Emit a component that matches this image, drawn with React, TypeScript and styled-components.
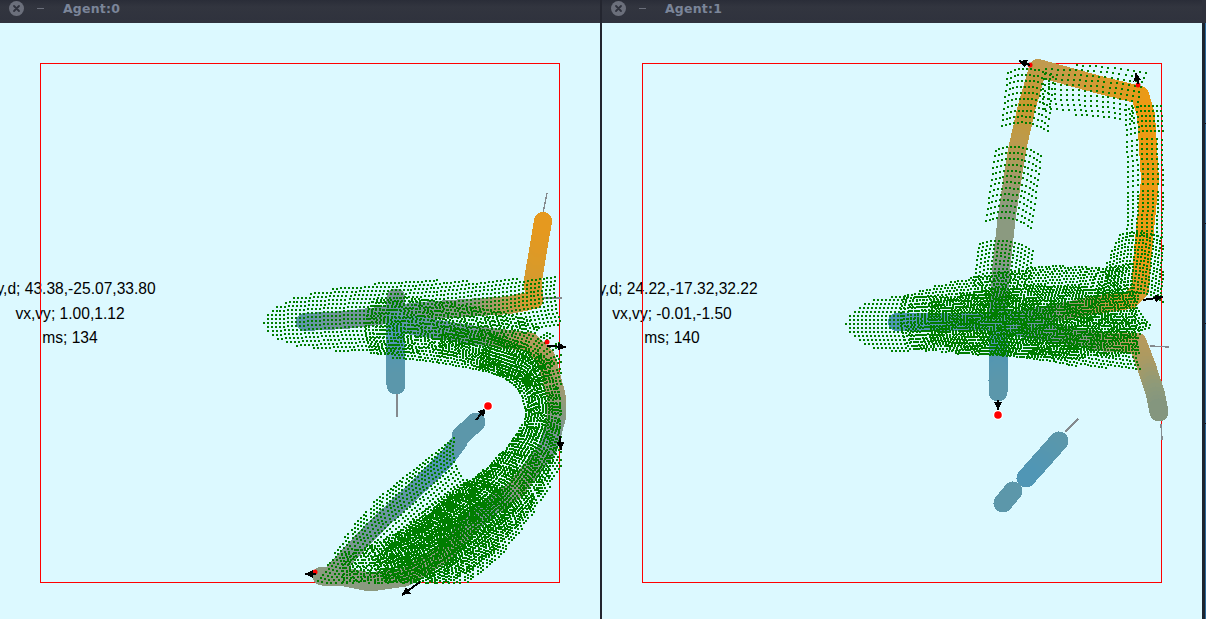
import React from "react"
import styled, { createGlobalStyle } from "styled-components"

// all plot data below is in screen pixels, each window's viewBox does the offset
type TrailPoint = [number, number, string]
type FanPoint = [number, number, number]
type Fan = { pts: FanPoint[]; row?: number; gap?: number; radius?: number; shift?: number }
type Arrow = { x1: number; y1: number; x2: number; y2: number }

type AgentData = {
    id: number
    originX: number
    readout: string[]
    trails: { pts: TrailPoint[]; width: number }[]
    fans: Fan[]
    arrows: Arrow[]
    needles: number[][]
    targets: number[][]
    marks: number[][]
}

const GlobalStyle = createGlobalStyle`
    html, body {
        margin: 0;
        padding: 0;
        height: 100%;
        overflow: hidden;
        background: #2d303c;
    }
    #root {
        height: 100%;
    }
`

const Desktop = styled.div`
    display: flex;
    width: 1206px;
    height: 619px;
    background: #2d303c;
`

const Window = styled.section`
    display: flex;
    flex-direction: column;
    width: 600px;
    height: 100%;
`

const Divider = styled.div`
    width: 2px;
    background: #23252f;
`

const EdgeStrip = styled.div`
    display: flex;
    flex-direction: column;
    flex: 1;
`

const EdgeCap = styled.div`
    flex: 0 0 23px;
    background: #2f323d;
`

const EdgeBody = styled.div`
    position: relative;
    flex: 1;
    background: #1c2530;
    border-right: 1px solid #2d6a9c;
`

const EdgeTick = styled.span<{ $y: number }>`
    position: absolute;
    right: -1px;
    width: 1px;
    top: ${(p) => p.$y}px;
    height: 1px;
    background: #10141a;
`

const TitleBar = styled.header`
    display: flex;
    align-items: center;
    flex: 0 0 23px;
    padding-left: 9px;
    padding-bottom: 6px;
    box-sizing: border-box;
    background: linear-gradient(#2a2d38, #32353f 30%, #2f323d);
`

const CloseButton = styled.span`
    display: flex;
    width: 15px;
    height: 15px;
    border-radius: 50%;
    background: #6b6f7b;
    color: #2f323d;
`

const MinimizeButton = styled.span`
    width: 7px;
    height: 1px;
    margin-left: 13px;
    background: #6b6f7b;
`

const WindowTitle = styled.span`
    margin-left: 19px;
    font-family: "DejaVu Sans", sans-serif;
    font-size: 12.5px;
    font-weight: 700;
    letter-spacing: 0.2px;
    color: #7b8599;
`

const Canvas = styled.div`
    position: relative;
    flex: 1;
    overflow: hidden;
    background: #dcf9ff;
`

const Readout = styled.div`
    position: absolute;
    left: -30px;
    top: 254px;
    width: 200px;
    font-family: "Liberation Sans", Arial, sans-serif;
    font-size: 15.6px;
    line-height: 24.5px;
    text-align: center;
    white-space: nowrap;
    color: #000;
`

const Plot = styled.svg`
    position: relative;
    display: block;
    width: 600px;
    height: 596px;
`

const hex = (c: string) => [1, 3, 5].map((i) => parseInt(c.slice(i, i + 2), 16))

function mix(a: string, b: string, t: number) {
    const ca = hex(a)
    const cb = hex(b)
    return `rgb(${ca.map((v, i) => Math.round(v + (cb[i] - v) * t)).join(",")})`
}

// walks a polyline in small steps so the colour can change along it
function trailSegments(pts: TrailPoint[]) {
    const out: { x1: number; y1: number; x2: number; y2: number; color: string }[] = []
    for (let i = 0; i < pts.length - 1; i++) {
        const [ax, ay, ac] = pts[i]
        const [bx, by, bc] = pts[i + 1]
        const steps = Math.max(1, Math.round(Math.hypot(bx - ax, by - ay) / 4))
        for (let s = 0; s < steps; s++) {
            out.push({
                x1: ax + ((bx - ax) * s) / steps,
                y1: ay + ((by - ay) * s) / steps,
                x2: ax + ((bx - ax) * (s + 1)) / steps,
                y2: ay + ((by - ay) * (s + 1)) / steps,
                color: mix(ac, bc, (s + 0.5) / steps),
            })
        }
    }
    return out
}

// corner cutting, so the rows of a fan turn gradually
function smooth(pts: FanPoint[]) {
    let cur = pts
    for (let n = 0; n < 2; n++) {
        const next: FanPoint[] = [cur[0]]
        for (let i = 0; i < cur.length - 1; i++) {
            const a = cur[i]
            const b = cur[i + 1]
            next.push([0, 1, 2].map((k) => a[k] * 0.75 + b[k] * 0.25) as FanPoint)
            next.push([0, 1, 2].map((k) => a[k] * 0.25 + b[k] * 0.75) as FanPoint)
        }
        next.push(cur[cur.length - 1])
        cur = next
    }
    return cur
}

// sensor footprint: circular rows of dots swept along the path
function fanDots(fan: Fan, clip: number[]) {
    const { row = 4, gap = 4, radius = 70, shift = 0 } = fan
    const pts = smooth(fan.pts)
    let d = ""
    let carried = shift
    for (let i = 0; i < pts.length - 1; i++) {
        const [ax, ay, aw] = pts[i]
        const [bx, by, bw] = pts[i + 1]
        const len = Math.hypot(bx - ax, by - ay)
        if (len === 0) continue
        const tx = (bx - ax) / len
        const ty = (by - ay) / len
        let pos = carried
        while (pos < len) {
            const f = pos / len
            const w = aw + (bw - aw) * f
            const cx = ax + (bx - ax) * f
            const cy = ay + (by - ay) * f
            const count = Math.floor(w / gap)
            for (let j = -count; j <= count; j++) {
                const theta = (j * gap) / radius
                const side = radius * Math.sin(theta)
                const ahead = radius * (1 - Math.cos(theta))
                const x = Math.round(cx - ty * side + tx * ahead)
                const y = Math.round(cy + tx * side + ty * ahead)
                if (x < clip[0] || x > clip[2] || y < clip[1] || y > clip[3]) continue
                d += `M${x} ${y}h2v2h-2z`
            }
            pos += row
        }
        carried = pos - len
    }
    return d
}

const BLUE = "#4f96b5"
const TEAL = "#5c97aa"
const SLATE = "#72959a"
const GREY = "#8b9a80"
const TAN = "#b19a5c"
const AMBER = "#d29a30"
const ORANGE = "#ec9a14"

const agents: AgentData[] = [
    {
        id: 0,
        originX: 0,
        readout: ["x,y,d; 43.38,-25.07,33.80", "vx,vy; 1.00,1.12", "ms; 134"],
        trails: [
            {
                width: 18,
                pts: [
                    [305, 322, TEAL],
                    [345, 320, SLATE],
                    [420, 311, SLATE],
                    [480, 307, GREY],
                    [510, 305, TAN],
                    [534, 300, AMBER],
                    [533, 280, AMBER],
                    [543, 221, "#e6991e"],
                ],
            },
            {
                width: 19,
                pts: [
                    [410, 325, TEAL],
                    [480, 336, SLATE],
                    [530, 342, TAN],
                    [546, 358, TAN],
                    [556, 395, "#a09a70"],
                    [557, 415, GREY],
                    [548, 448, SLATE],
                    [515, 490, GREY],
                    [480, 515, SLATE],
                    [440, 556, GREY],
                    [405, 577, GREY],
                    [370, 582, GREY],
                    [345, 577, GREY],
                    [322, 576, GREY],
                ],
            },
            {
                width: 17,
                pts: [
                    [335, 570, GREY],
                    [372, 530, SLATE],
                    [420, 485, "#5f96a8"],
                    [447, 458, BLUE],
                    [459, 442, TEAL],
                ],
            },
            {
                width: 19,
                pts: [
                    [461, 436, TEAL],
                    [476, 422, TEAL],
                ],
            },
            {
                width: 19,
                pts: [
                    [396, 298, "#7b9490"],
                    [395, 340, BLUE],
                    [396, 385, TEAL],
                ],
            },
        ],
        fans: [
            {
                pts: [
                    [263, 322, 2],
                    [272, 322, 16],
                    [295, 321, 27],
                    [350, 318, 36],
                    [420, 316, 38],
                    [480, 310, 30],
                    [556, 300, 26],
                ],
                row: 4,
                radius: 80,
            },
            {
                pts: [
                    [365, 325, 30],
                    [420, 328, 34],
                    [500, 342, 34],
                    [540, 356, 28],
                    [552, 390, 26],
                    [552, 425, 28],
                    [525, 470, 32],
                    [485, 515, 44],
                    [445, 550, 46],
                    [405, 570, 36],
                    [340, 574, 20],
                ],
                row: 3.5,
                gap: 3.5,
                radius: 60,
            },
            {
                pts: [
                    [480, 350, 18],
                    [530, 368, 20],
                    [548, 420, 18],
                    [515, 480, 34],
                    [470, 525, 42],
                    [430, 555, 34],
                    [380, 575, 20],
                ],
                row: 3,
                gap: 3,
                radius: 45,
                shift: 2,
            },
            {
                pts: [
                    [330, 600, 24],
                    [385, 540, 48],
                    [463, 478, 46],
                ],
                row: 4,
                gap: 4,
                radius: 48,
            },
            {
                pts: [
                    [390, 570, 24],
                    [440, 535, 34],
                    [500, 490, 28],
                ],
                row: 3.5,
                gap: 3,
                radius: 70,
            },
            {
                pts: [
                    [440, 340, 16],
                    [510, 355, 20],
                    [545, 375, 16],
                ],
                row: 3,
                gap: 3,
                radius: 90,
            },
        ],
        arrows: [
            { x1: 547, y1: 346, x2: 566, y2: 347 },
            { x1: 476, y1: 420, x2: 486, y2: 408 },
            { x1: 560, y1: 436, x2: 561, y2: 450 },
            { x1: 420, y1: 582, x2: 402, y2: 595 },
            { x1: 316, y1: 574, x2: 305, y2: 574 },
        ],
        needles: [
            [543, 213, 547, 193],
            [397, 392, 397, 417],
            [540, 298, 562, 298],
        ],
        targets: [[488, 406]],
        marks: [
            [547, 342],
            [315, 572],
        ],
    },
    {
        id: 1,
        originX: 602,
        readout: ["x,y,d; 24.22,-17.32,32.22", "vx,vy; -0.01,-1.50", "ms; 140"],
        trails: [
            {
                width: 18,
                pts: [
                    [897, 322, BLUE],
                    [1000, 322, TEAL],
                    [1050, 314, SLATE],
                    [1090, 306, "#a49468"],
                    [1130, 300, AMBER],
                    [1140, 290, AMBER],
                    [1143, 250, ORANGE],
                    [1150, 180, ORANGE],
                    [1146, 115, ORANGE],
                    [1140, 95, ORANGE],
                    [1100, 85, "#d79a2c"],
                    [1038, 68, "#c09a50"],
                    [1026, 110, "#c8982f"],
                    [1017, 150, "#bc9a4c"],
                    [1007, 215, GREY],
                    [1002, 260, GREY],
                    [999, 300, SLATE],
                ],
            },
            {
                width: 19,
                pts: [
                    [999, 300, SLATE],
                    [998, 350, BLUE],
                    [998, 392, TEAL],
                ],
            },
            {
                width: 19,
                pts: [
                    [1010, 326, TEAL],
                    [1060, 334, SLATE],
                    [1103, 342, GREY],
                    [1137, 342, "#b89a5c"],
                    [1146, 365, "#ad9a60"],
                    [1155, 392, "#8f9a78"],
                    [1159, 412, "#83957f"],
                ],
            },
            {
                width: 19,
                pts: [
                    [1059, 441, TEAL],
                    [1026, 478, BLUE],
                ],
            },
            {
                width: 19,
                pts: [
                    [1013, 491, TEAL],
                    [1003, 503, TEAL],
                ],
            },
        ],
        fans: [
            {
                pts: [
                    [845, 323, 3],
                    [853, 323, 16],
                    [875, 323, 28],
                    [905, 323, 29],
                ],
                row: 4,
                gap: 4,
                radius: 70,
            },
            {
                pts: [
                    [900, 322, 28],
                    [960, 316, 44],
                    [1040, 310, 52],
                    [1100, 306, 40],
                    [1136, 296, 34],
                ],
                row: 3.5,
                gap: 3.5,
                radius: 60,
            },
            {
                pts: [
                    [905, 322, 28],
                    [960, 322, 34],
                    [1040, 328, 36],
                    [1100, 340, 28],
                    [1138, 345, 24],
                ],
                row: 3.5,
                gap: 4,
                radius: 45,
                shift: 1,
            },
            {
                pts: [
                    [930, 322, 22],
                    [1010, 320, 38],
                    [1090, 322, 36],
                    [1136, 322, 30],
                ],
                row: 3,
                gap: 3,
                radius: 110,
            },
            {
                pts: [
                    [1006, 240, 28],
                    [1002, 270, 30],
                    [998, 318, 28],
                ],
                row: 4,
                gap: 4,
                radius: 55,
            },
            {
                pts: [
                    [1018, 146, 24],
                    [1014, 180, 27],
                    [1008, 220, 27],
                ],
                row: 6,
                gap: 4,
                radius: 45,
            },
            {
                pts: [
                    [1030, 68, 24],
                    [1027, 100, 24],
                    [1024, 127, 25],
                ],
                row: 6,
                gap: 4,
                radius: 45,
            },
            {
                pts: [
                    [1042, 88, 22],
                    [1100, 90, 28],
                    [1138, 96, 28],
                ],
                row: 6,
                gap: 5,
                radius: 90,
            },
            {
                pts: [
                    [1144, 105, 20],
                    [1146, 132, 20],
                ],
                row: 5,
                gap: 4,
                radius: 90,
            },
            {
                pts: [
                    [1146, 138, 20],
                    [1147, 186, 20],
                ],
                row: 5,
                gap: 5,
                radius: 80,
            },
            {
                pts: [
                    [1147, 190, 20],
                    [1146, 237, 22],
                ],
                row: 4,
                gap: 5,
                radius: 70,
            },
            {
                pts: [
                    [1143, 232, 26],
                    [1136, 292, 50],
                ],
                row: 3.5,
                gap: 3.5,
                radius: 60,
            },
        ],
        arrows: [
            { x1: 998, y1: 400, x2: 998, y2: 410 },
            { x1: 1030, y1: 65, x2: 1019, y2: 61 },
            { x1: 1138, y1: 84, x2: 1136, y2: 73 },
            { x1: 1143, y1: 300, x2: 1163, y2: 297 },
        ],
        needles: [
            [1065, 432, 1078, 419],
            [1150, 346, 1169, 347],
            [1161, 424, 1162, 440],
        ],
        targets: [[998, 415]],
        marks: [
            [1030, 65],
            [1138, 85],
        ],
    },
]

function ArrowHead({ x1, y1, x2, y2 }: Arrow) {
    const len = Math.hypot(x2 - x1, y2 - y1)
    const ux = (x2 - x1) / len
    const uy = (y2 - y1) / len
    const bx = x2 - ux * 8
    const by = y2 - uy * 8
    return (
        <>
            <line x1={x1} y1={y1} x2={x2} y2={y2} stroke="#000" strokeWidth={2} />
            <polygon
                points={`${x2},${y2} ${bx - uy * 4},${by + ux * 4} ${bx + uy * 4},${by - ux * 4}`}
                fill="#000"
            />
        </>
    )
}

function AgentPlot({ agent }: { agent: AgentData }) {
    const left = agent.originX + 40
    const clip = [left - 1, 62, left + 520, 582]
    const dots = agent.fans.map((f) => fanDots(f, clip)).join("")

    return (
        <Plot viewBox={`${agent.originX} 23 600 596`} shapeRendering="crispEdges">
            <rect x={left + 0.5} y={63.5} width={519} height={519} fill="none" stroke="#f00" />
            {agent.needles.map((n, i) => (
                <line key={i} x1={n[0]} y1={n[1]} x2={n[2]} y2={n[3]} stroke="#858a8e" strokeWidth={1.5} />
            ))}
            {agent.trails.map((trail, i) => (
                <g key={i} strokeWidth={trail.width} strokeLinecap="round">
                    {trailSegments(trail.pts).map((s, j) => (
                        <line key={j} x1={s.x1} y1={s.y1} x2={s.x2} y2={s.y2} stroke={s.color} />
                    ))}
                </g>
            ))}
            <path d={dots} fill="#007d00" />
            {agent.marks.map((m, i) => (
                <circle key={i} cx={m[0]} cy={m[1]} r={2.5} fill="#f00" shapeRendering="auto" />
            ))}
            {agent.arrows.map((a, i) => (
                <ArrowHead key={i} {...a} />
            ))}
            {agent.targets.map((t, i) => (
                <g key={i} shapeRendering="auto">
                    <circle cx={t[0]} cy={t[1]} r={5} fill="#fff" />
                    <circle cx={t[0]} cy={t[1]} r={3.8} fill="#f00" />
                </g>
            ))}
        </Plot>
    )
}

function AgentWindow({ agent }: { agent: AgentData }) {
    return (
        <Window>
            <TitleBar>
                <CloseButton>
                    <svg width="15" height="15" viewBox="0 0 15 15">
                        <path d="M5 5l5 5M10 5l-5 5" stroke="currentColor" strokeWidth="1.8" strokeLinecap="round" />
                    </svg>
                </CloseButton>
                <MinimizeButton />
                <WindowTitle>Agent:{agent.id}</WindowTitle>
            </TitleBar>
            <Canvas>
                <Readout>
                    {agent.readout.map((line) => (
                        <div key={line}>{line}</div>
                    ))}
                </Readout>
                <AgentPlot agent={agent} />
            </Canvas>
        </Window>
    )
}

export default function App() {
    return (
        <>
            <GlobalStyle />
            <Desktop>
                <AgentWindow agent={agents[0]} />
                <Divider />
                <AgentWindow agent={agents[1]} />
                <EdgeStrip>
                    <EdgeCap />
                    <EdgeBody>
                        {[100, 200, 300, 400].map((y) => (
                            <EdgeTick key={y} $y={y} />
                        ))}
                    </EdgeBody>
                </EdgeStrip>
            </Desktop>
        </>
    )
}
